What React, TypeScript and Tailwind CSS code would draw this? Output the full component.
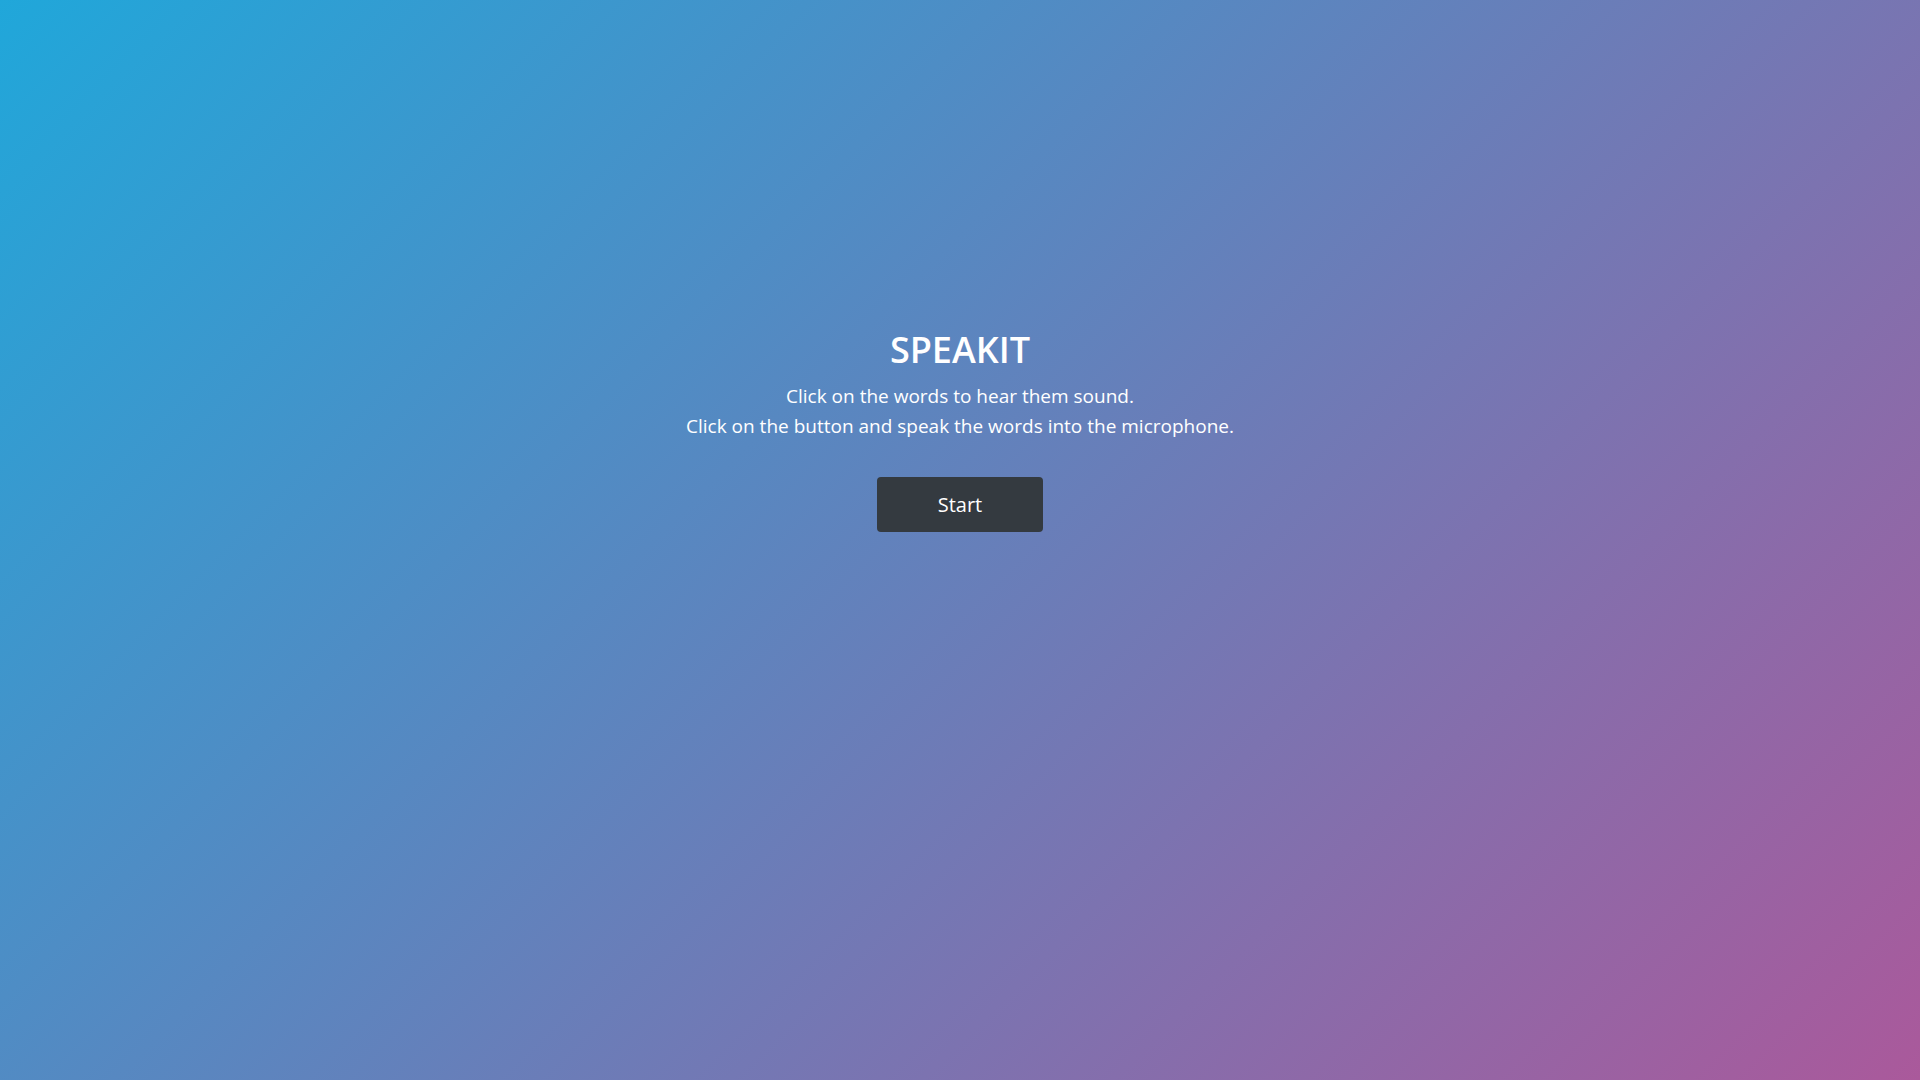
export default function App() {
  return (
    <div className="min-h-screen w-full bg-[linear-gradient(135deg,#20a7da,#aa599b)] font-['Open_Sans','Noto_Sans',sans-serif] text-white">
      <div className="flex flex-col items-center pt-[329px] text-center">
        <h1 className="text-[36px] font-semibold leading-[42px]">SPEAKIT</h1>
        <p className="mt-[10px] text-[19px] leading-[30px]">
          Click on the words to hear them sound.
          <br />
          Click on the button and speak the words into the microphone.
        </p>
        <button className="mt-[36px] h-[55px] w-[166px] rounded-[4px] bg-[#343a40] text-[20px] text-white">
          Start
        </button>
      </div>
    </div>
  );
}
